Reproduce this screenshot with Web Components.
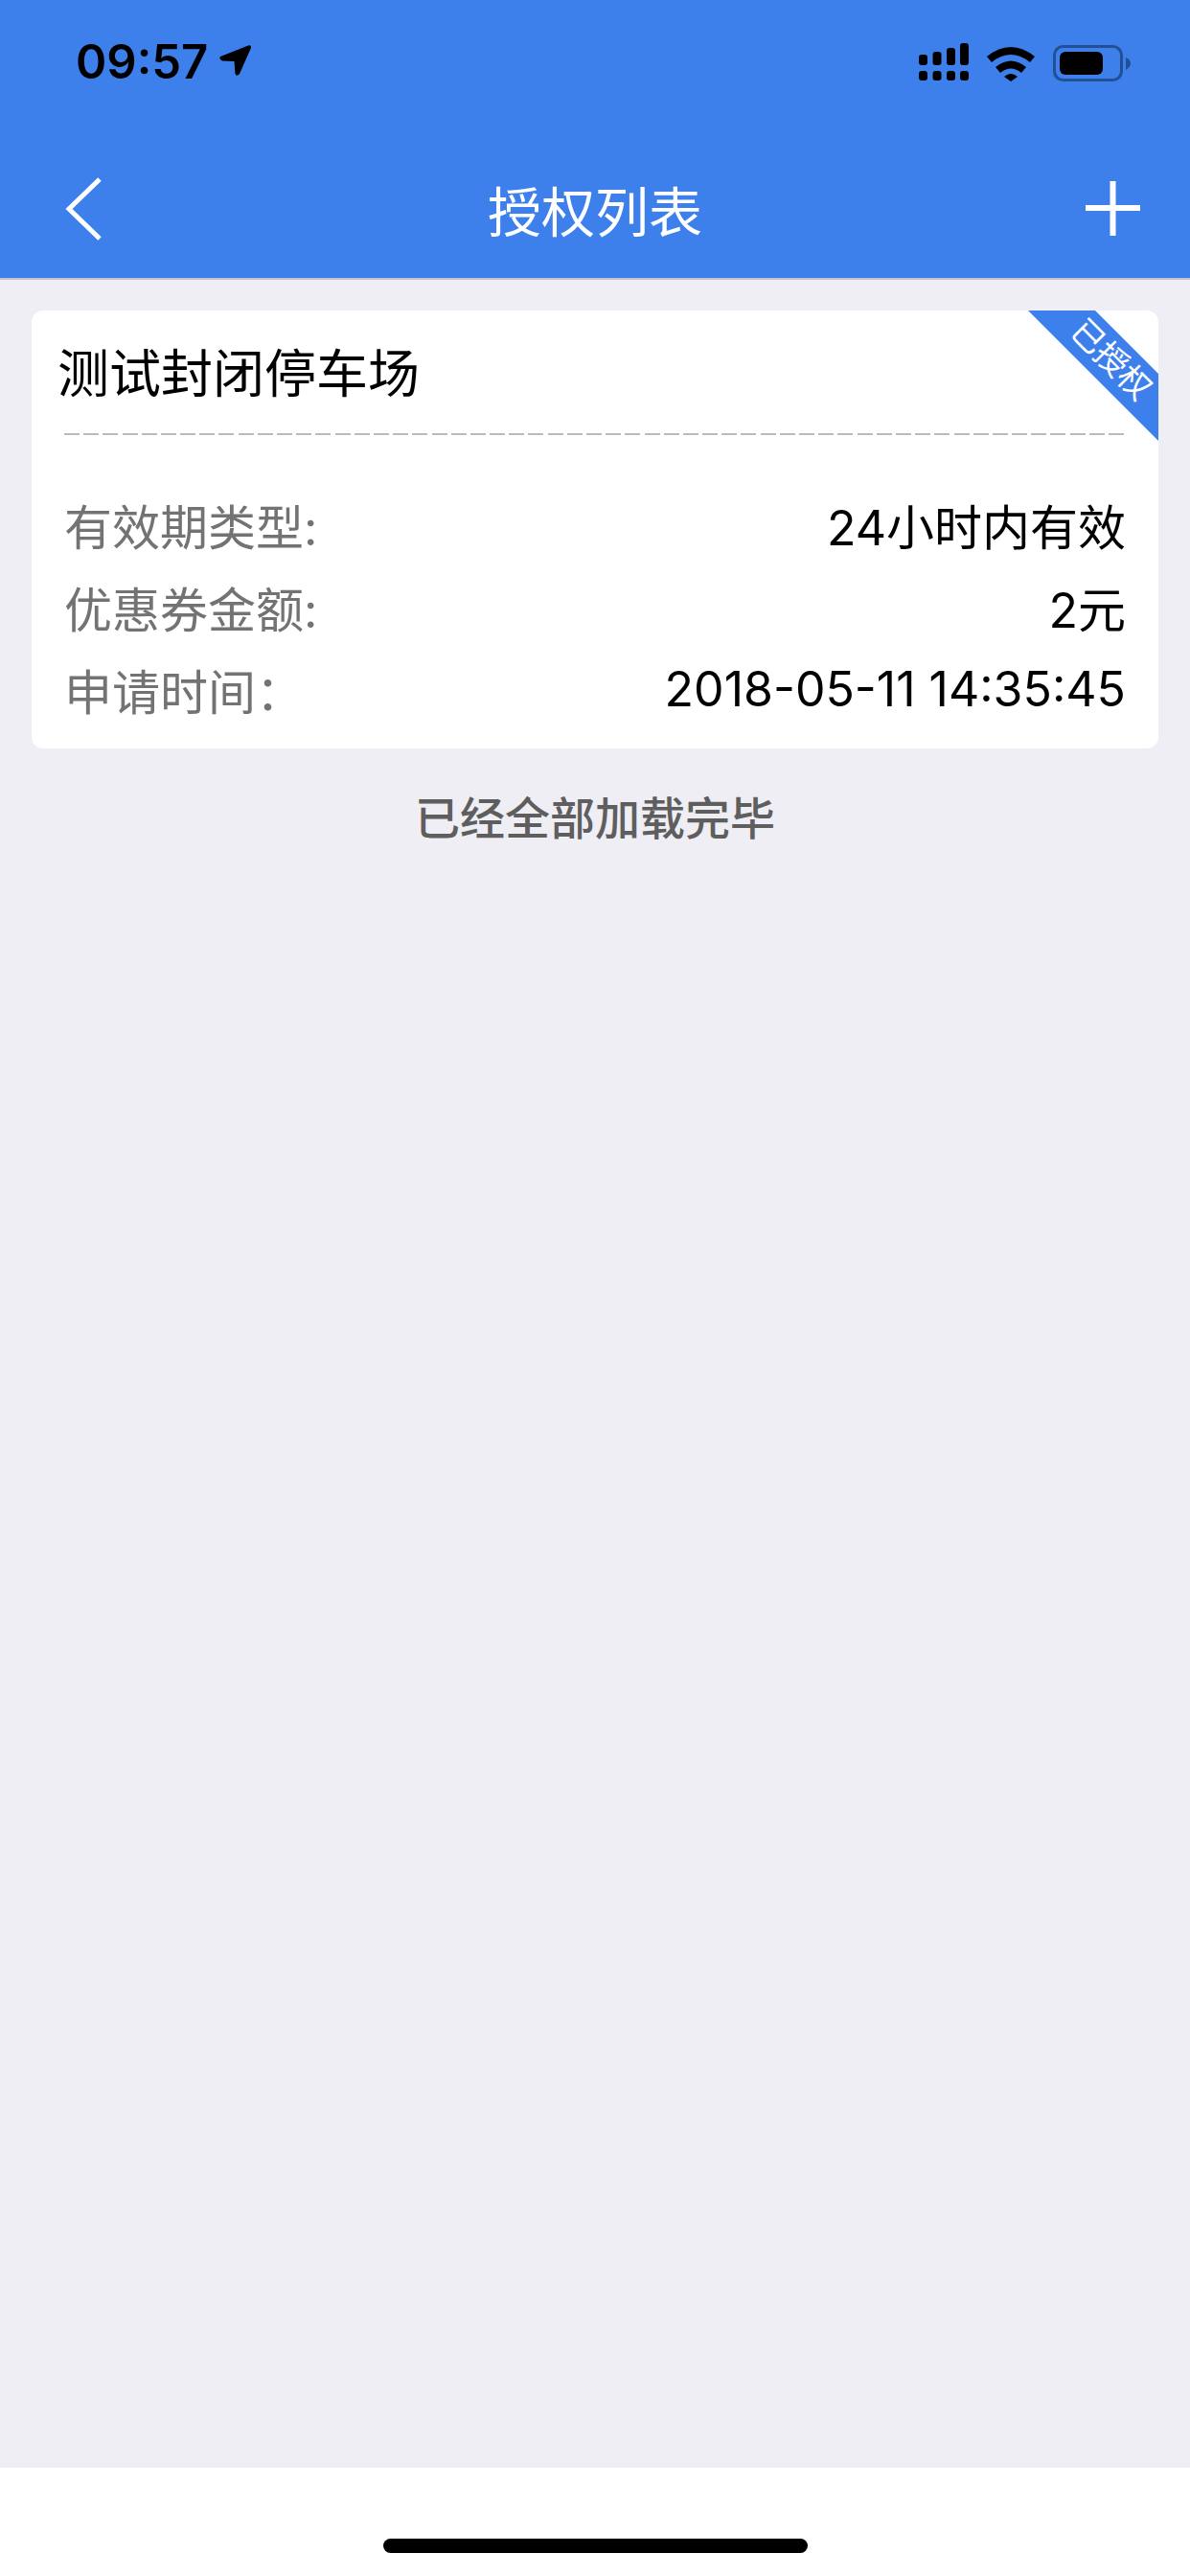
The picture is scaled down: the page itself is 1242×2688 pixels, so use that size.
<!DOCTYPE html>
<html lang="zh-CN">
<head>
<meta charset="utf-8">
<title>授权列表</title>
<style>
  html, body {
    margin: 0;
    padding: 0;
    height: 100%;
  }
  body {
    display: flex;
    flex-direction: column;
    height: 2688px;
    background: #efeef4;
    font-family: Inter, "Noto Sans CJK SC", sans-serif;
    overflow: hidden;
  }
  grant-list {
    flex: 1;
  }
</style>
</head>
<body>
  <app-header title-text="授权列表"></app-header>
  <grant-list>
    <grant-card name="测试封闭停车场" status="已授权">
      <info-row label="有效期类型:">24小时内有效</info-row>
      <info-row label="优惠券金额:">2元</info-row>
      <info-row label="申请时间：">2018-05-11 14:35:45</info-row>
    </grant-card>
    <load-end>已经全部加载完毕</load-end>
  </grant-list>
  <home-bar></home-bar>

<script>
class AppHeader extends HTMLElement {
  constructor() {
    super();
    this.shadowDOM = this.attachShadow({ mode: "open" });
  }

  connectedCallback() {
    this.render();
  }

  render() {
    this.shadowDOM.innerHTML = /* html */ `
      <style>
        * {
          margin: 0;
          padding: 0;
          box-sizing: border-box;
        }
        :host {
          display: block;
          background: #3d80ec;
          border-bottom: 2px solid #c4c5cc;
        }
        .status {
          height: 145px;
          display: flex;
          justify-content: space-between;
          padding: 45px 62px 0 79px;
        }
        .left, .right {
          display: flex;
          height: 40px;
          align-items: center;
        }
        .time {
          font-size: 49px;
          font-weight: 600;
          line-height: 40px;
          color: #000;
        }
        .left svg {
          margin-left: 12px;
          margin-top: -4px;
        }
        .right svg {
          display: block;
        }
        .nav {
          height: 145px;
          display: grid;
          grid-template-columns: 1fr auto 1fr;
          align-items: center;
          padding: 0 52px;
        }
        h1 {
          font-size: 56px;
          font-weight: 400;
          color: #fff;
        }
        .nav svg {
          display: block;
        }
        .nav svg:first-child {
          margin-left: 16px;
        }
        .nav svg:last-child {
          justify-self: end;
        }
      </style>
      <div class="status">
        <div class="left">
          <span class="time">09:57</span>
          <svg width="34" height="34" viewBox="0 0 34 34"><path d="M1 13 L30 1.500 Q33.500 0.500 33 4 L21 31 Q18 34.500 16.500 31 L15.500 18 L3 17.500 Q-1 15.500 1 13 Z" fill="#000"/></svg>
        </div>
        <div class="right">
          <svg width="221" height="40" viewBox="0 0 221 40">
            <g fill="#000">
              <rect x="0" y="12" width="9" height="11" rx="3"/>
              <rect x="14.500" y="9" width="9" height="14" rx="3"/>
              <rect x="29" y="5" width="9" height="18" rx="3"/>
              <rect x="43" y="0" width="9" height="23" rx="3"/>
              <rect x="0" y="29" width="9" height="10" rx="3"/>
              <rect x="14.500" y="29" width="9" height="10" rx="3"/>
              <rect x="29" y="29" width="9" height="10" rx="3"/>
              <rect x="43" y="29" width="9" height="10" rx="3"/>
              <path d="M71 14 Q96 -6 121 14 L116 20 Q96 4 76 20 Z"/>
              <path d="M80 25 Q96 12 112 25 L107 31 Q96 22 85 31 Z"/>
              <path d="M89 35 Q96 29 103 35 L96 40 Z"/>
            </g>
            <rect x="141.500" y="3.500" width="70" height="35" rx="9" fill="none" stroke="#234f94" stroke-width="3"/>
            <rect x="147" y="9" width="45" height="24" rx="6" fill="#000"/>
            <path d="M216 15 Q221 17 221 21 Q221 25 216 28 Z" fill="#234f94"/>
          </svg>
        </div>
      </div>
      <div class="nav">
        <svg width="40" height="66" viewBox="0 0 40 66"><path d="M36 2 L4 33 L36 64" fill="none" stroke="#fff" stroke-width="5"/></svg>
        <h1>${this.getAttribute("title-text")}</h1>
        <svg width="57" height="57" viewBox="0 0 57 57"><path d="M28.500 0 V57 M0 28 H57" fill="none" stroke="#fff" stroke-width="6"/></svg>
      </div>
    `;
  }
}

class GrantList extends HTMLElement {
  constructor() {
    super();
    this.shadowDOM = this.attachShadow({ mode: "open" });
  }

  connectedCallback() {
    this.shadowDOM.innerHTML = /* html */ `
      <style>
        :host {
          display: flex;
          flex-direction: column;
          gap: 45px;
          padding: 32px 33px 0;
        }
      </style>
      <slot></slot>
    `;
  }
}

class GrantCard extends HTMLElement {
  constructor() {
    super();
    this.shadowDOM = this.attachShadow({ mode: "open" });
  }

  connectedCallback() {
    this.shadowDOM.innerHTML = /* html */ `
      <style>
        * {
          margin: 0;
          padding: 0;
          box-sizing: border-box;
        }
        :host {
          display: block;
          position: relative;
          background: #fff;
          border-radius: 12px;
        }
        h2 {
          font-size: 54px;
          font-weight: 400;
          line-height: 122px;
          color: #000;
          padding: 6px 0 0 27px;
        }
        .dash {
          height: 2px;
          margin: 0 36px 0 34px;
          background: repeating-linear-gradient(90deg, #bbb 0 16px, transparent 16px 20.185px);
        }
        .rows {
          display: flex;
          flex-direction: column;
          padding: 50px 34px 19px;
        }
        .band {
          position: absolute;
          top: 0;
          right: 0;
          width: 136px;
          height: 136px;
          background: #3d80ec;
          clip-path: polygon(0 0, 70px 0, 136px 66px, 136px 136px);
        }
        .stamp {
          position: absolute;
          top: 51px;
          right: 49px;
          transform: translate(50%, -50%) rotate(45deg);
          font-size: 34px;
          line-height: 34px;
          white-space: nowrap;
          color: #fff;
        }
      </style>
      <h2>${this.getAttribute("name")}</h2>
      <div class="dash"></div>
      <div class="rows"><slot></slot></div>
      <div class="band"></div>
      <span class="stamp">${this.getAttribute("status")}</span>
    `;
  }
}

class InfoRow extends HTMLElement {
  constructor() {
    super();
    this.shadowDOM = this.attachShadow({ mode: "open" });
  }

  connectedCallback() {
    this.shadowDOM.innerHTML = /* html */ `
      <style>
        :host {
          display: flex;
          justify-content: space-between;
          align-items: center;
          height: 86px;
          font-size: 50px;
          color: #000;
        }
        .label {
          color: #737373;
        }
      </style>
      <span class="label">${this.getAttribute("label")}</span>
      <span><slot></slot></span>
    `;
  }
}

class LoadEnd extends HTMLElement {
  constructor() {
    super();
    this.shadowDOM = this.attachShadow({ mode: "open" });
  }

  connectedCallback() {
    this.shadowDOM.innerHTML = /* html */ `
      <style>
        :host {
          display: block;
          text-align: center;
          font-size: 47px;
          font-weight: 500;
          line-height: 56px;
          color: #5e5e5e;
        }
      </style>
      <slot></slot>
    `;
  }
}

class HomeBar extends HTMLElement {
  constructor() {
    super();
    this.shadowDOM = this.attachShadow({ mode: "open" });
  }

  connectedCallback() {
    this.shadowDOM.innerHTML = /* html */ `
      <style>
        :host {
          display: flex;
          justify-content: center;
          height: 113px;
          padding-top: 74px;
          box-sizing: border-box;
          background: #fff;
        }
        div {
          width: 443px;
          height: 15px;
          border-radius: 8px;
          background: #000;
        }
      </style>
      <div></div>
    `;
  }
}

customElements.define("app-header", AppHeader);
customElements.define("grant-list", GrantList);
customElements.define("grant-card", GrantCard);
customElements.define("info-row", InfoRow);
customElements.define("load-end", LoadEnd);
customElements.define("home-bar", HomeBar);
</script>
</body>
</html>
